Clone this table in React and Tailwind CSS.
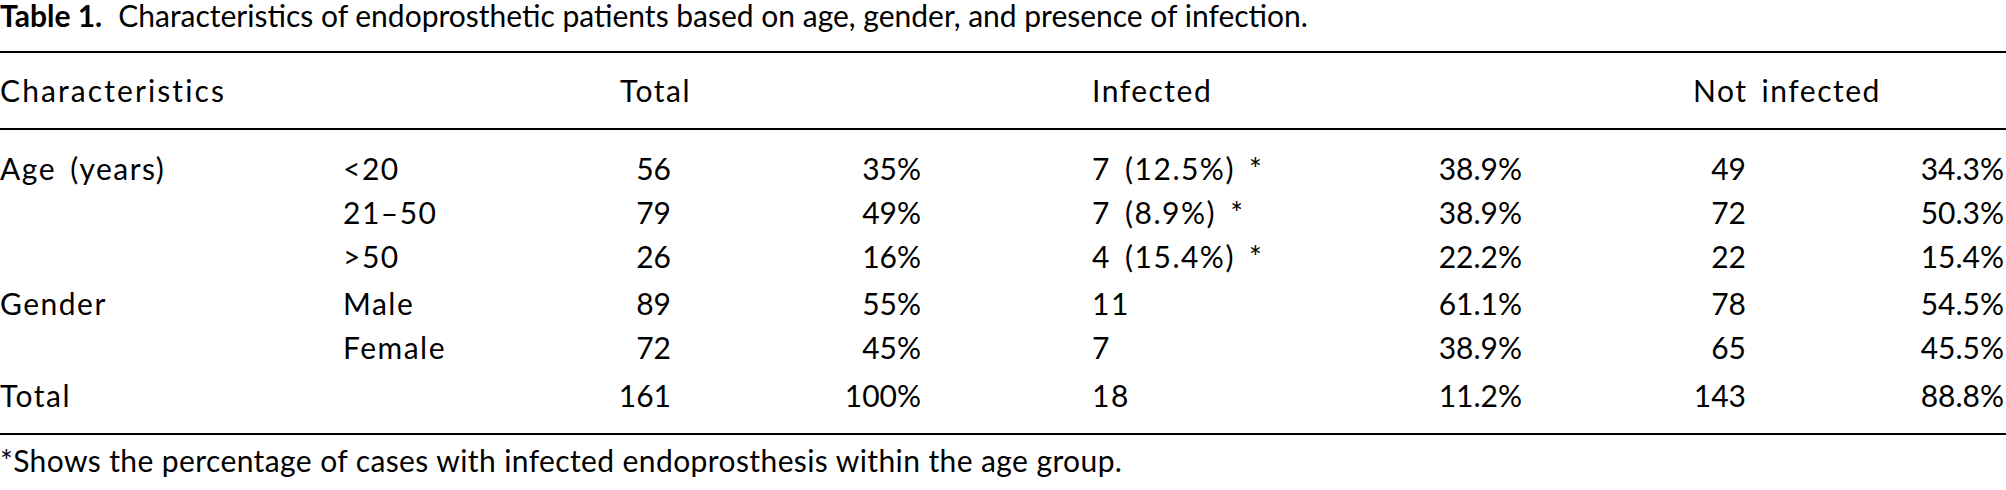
import React from "react";

const rows = [
  { a: "Age (years)", b: "<20", c: "56", d: "35%", e: "7 (12.5%) *", f: "38.9%", g: "49", h: "34.3%", gap: "" },
  { a: "", b: "21–50", c: "79", d: "49%", e: "7 (8.9%) *", f: "38.9%", g: "72", h: "50.3%", gap: "" },
  { a: "", b: ">50", c: "26", d: "16%", e: "4 (15.4%) *", f: "22.2%", g: "22", h: "15.4%", gap: "" },
  { a: "Gender", b: "Male", c: "89", d: "55%", e: "11", f: "61.1%", g: "78", h: "54.5%", gap: "mt-[3px]" },
  { a: "", b: "Female", c: "72", d: "45%", e: "7", f: "38.9%", g: "65", h: "45.5%", gap: "" },
  { a: "Total", b: "", c: "161", d: "100%", e: "18", f: "11.2%", g: "143", h: "88.8%", gap: "mt-[4px]" },
];

const grid =
  "grid grid-cols-[343px_277px_51px_250px_171px_200px_230px_171px_53px_258px]";

function R({ children }) {
  return <div className="flex justify-end whitespace-nowrap">{children}</div>;
}
function W({ children }) {
  return (
    <div className="whitespace-nowrap tracking-[1.5px] [word-spacing:5px]">{children}</div>
  );
}

export default function App() {
  return (
    <div
      className="w-[2006px] h-[490px] bg-white text-black text-[30px] overflow-hidden"
      style={{ fontFamily: "Lato, 'Open Sans', sans-serif" }}
    >
      <div className="leading-[30px] whitespace-nowrap">
        <span className="font-bold">Table 1.</span>
        <span className="ml-[16px]">
          Characteristics of endoprosthetic patients based on age, gender, and presence of infection.
        </span>
      </div>
      <div className="mt-[21px] border-t-2 border-black" />
      <div className={`${grid} h-[75px] leading-[75px]`}>
        <div className="col-start-1 whitespace-nowrap tracking-[2.1px]">Characteristics</div>
        <div className="col-start-3 col-span-2">
          <W>Total</W>
        </div>
        <div className="col-start-6 col-span-2">
          <W>Infected</W>
        </div>
        <div className="col-start-9 col-span-2">
          <W>Not infected</W>
        </div>
      </div>
      <div className="border-t-2 border-black" />
      <div className="pt-[16px] pb-[16px]">
        {rows.map((r, i) => (
          <div key={i} className={`${grid} h-[44px] leading-[44px] ${r.gap}`}>
            <W>{r.a}</W>
            <W>{r.b}</W>
            <R>{r.c}</R>
            <R>{r.d}</R>
            <div />
            <W>{r.e}</W>
            <R>{r.f}</R>
            <div />
            <R>{r.g}</R>
            <R>{r.h}</R>
          </div>
        ))}
      </div>
      <div className="border-t-2 border-black" />
      <div className="leading-[50px] whitespace-nowrap tracking-[0.4px]">
        *Shows the percentage of cases with infected endoprosthesis within the age group.
      </div>
    </div>
  );
}
